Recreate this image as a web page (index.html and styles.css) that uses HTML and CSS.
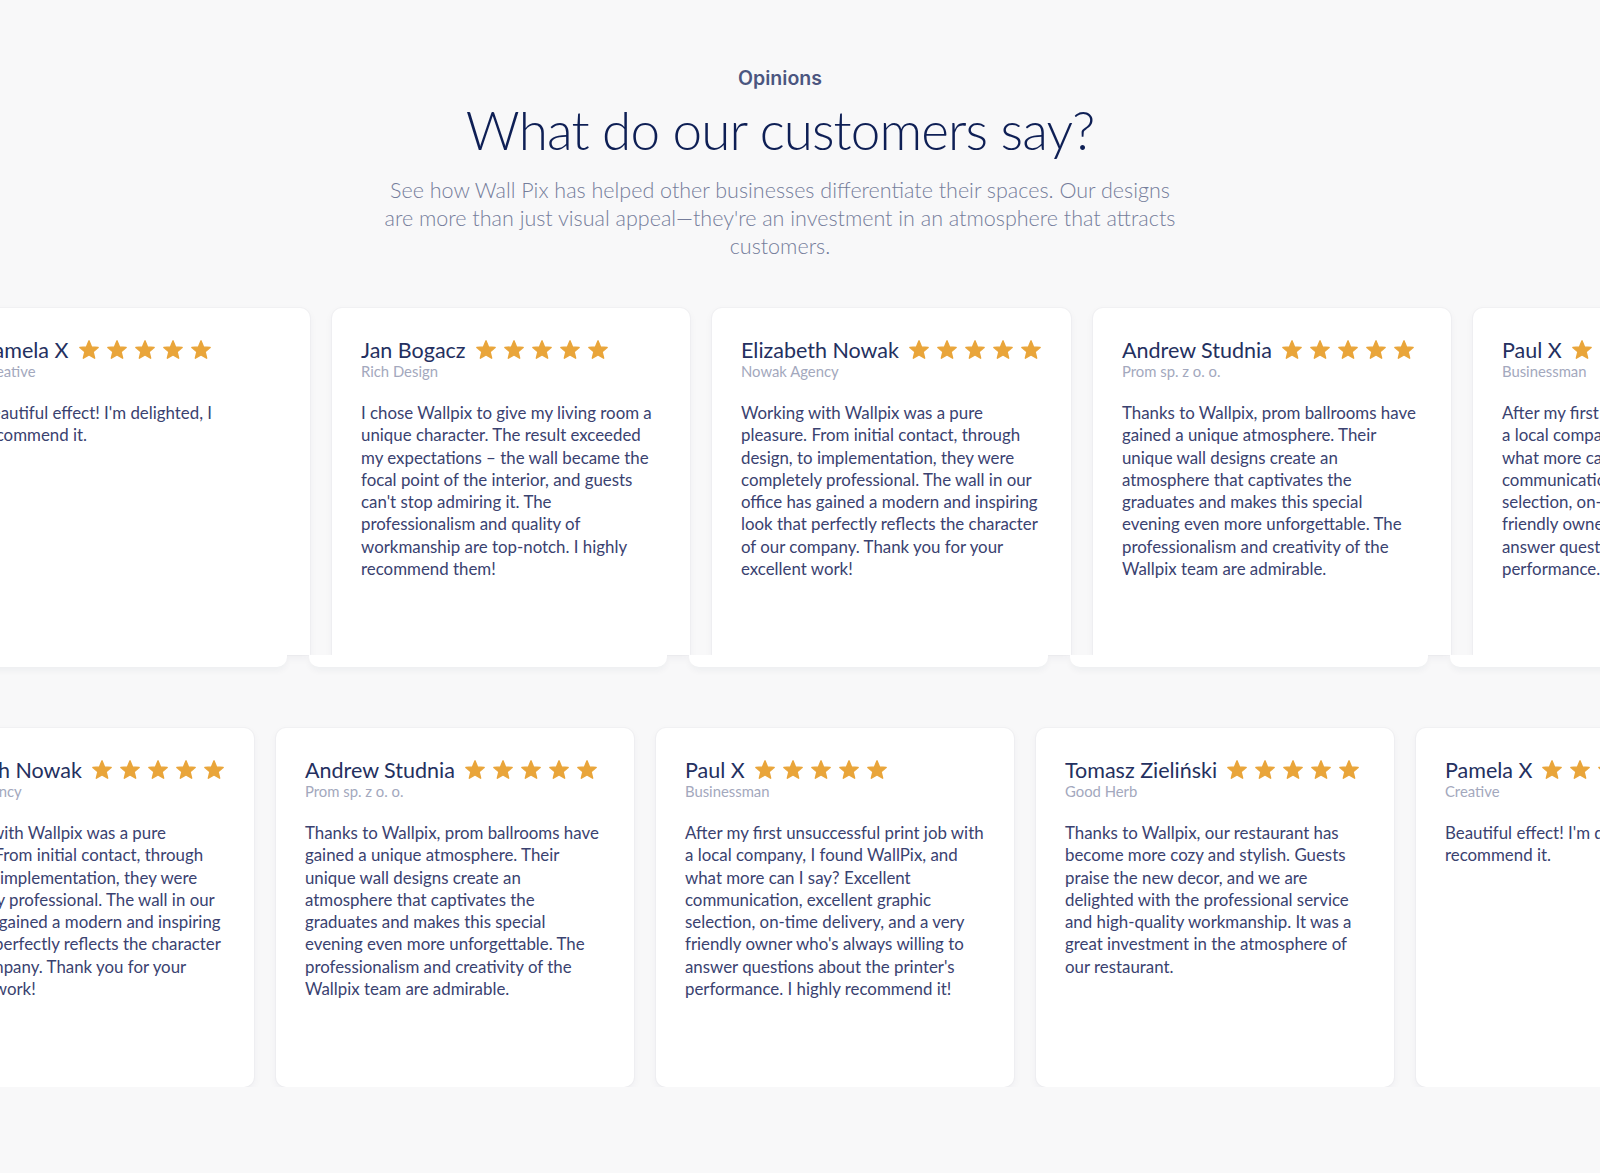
FILE: index.html
```html
<!DOCTYPE html>
<html lang="en">
<head>
<meta charset="utf-8">
<title>Opinions</title>
<link rel="stylesheet" href="styles.css">
</head>
<body>
<svg class="defs" width="0" height="0" aria-hidden="true">
  <symbol id="star" viewBox="0 0 24 24">
    <path d="M12 17.27L18.18 21l-1.64-7.03L22 9.24l-7.19-.61L12 2 9.19 8.63 2 9.24l5.46 4.73L5.82 21z" fill="#e9a53a" stroke="#e9a53a" stroke-width="1.5" stroke-linejoin="round"/>
  </symbol>
</svg>
<section class="opinions">
  <header class="intro">
    <p class="eyebrow">Opinions</p>
    <h2 class="title">What do our customers say?</h2>
    <p class="lead">See how Wall Pix has helped other businesses differentiate their spaces. Our designs are more than just visual appeal—they're an investment in an atmosphere that attracts customers.</p>
  </header>

  <div class="track track-1">
    <article class="card">
      <div class="who"><h3 class="name">Pamela X</h3><div class="stars"><svg><use href="#star"/></svg><svg><use href="#star"/></svg><svg><use href="#star"/></svg><svg><use href="#star"/></svg><svg><use href="#star"/></svg></div></div>
      <p class="role">Creative</p>
      <p class="text">Beautiful effect! I'm delighted, I recommend it.</p>
    </article>
    <article class="card">
      <div class="who"><h3 class="name">Jan Bogacz</h3><div class="stars"><svg><use href="#star"/></svg><svg><use href="#star"/></svg><svg><use href="#star"/></svg><svg><use href="#star"/></svg><svg><use href="#star"/></svg></div></div>
      <p class="role">Rich Design</p>
      <p class="text">I chose Wallpix to give my living room a unique character. The result exceeded my expectations – the wall became the focal point of the interior, and guests can't stop admiring it. The professionalism and quality of workmanship are top-notch. I highly recommend them!</p>
    </article>
    <article class="card">
      <div class="who"><h3 class="name">Elizabeth Nowak</h3><div class="stars"><svg><use href="#star"/></svg><svg><use href="#star"/></svg><svg><use href="#star"/></svg><svg><use href="#star"/></svg><svg><use href="#star"/></svg></div></div>
      <p class="role">Nowak Agency</p>
      <p class="text">Working with Wallpix was a pure pleasure. From initial contact, through design, to implementation, they were completely professional. The wall in our office has gained a modern and inspiring look that perfectly reflects the character of our company. Thank you for your excellent work!</p>
    </article>
    <article class="card">
      <div class="who"><h3 class="name">Andrew Studnia</h3><div class="stars"><svg><use href="#star"/></svg><svg><use href="#star"/></svg><svg><use href="#star"/></svg><svg><use href="#star"/></svg><svg><use href="#star"/></svg></div></div>
      <p class="role">Prom sp. z o. o.</p>
      <p class="text">Thanks to Wallpix, prom ballrooms have gained a unique atmosphere. Their unique wall designs create an atmosphere that captivates the graduates and makes this special evening even more unforgettable. The professionalism and creativity of the Wallpix team are admirable.</p>
    </article>
    <article class="card">
      <div class="who"><h3 class="name">Paul X</h3><div class="stars"><svg><use href="#star"/></svg><svg><use href="#star"/></svg><svg><use href="#star"/></svg><svg><use href="#star"/></svg><svg><use href="#star"/></svg></div></div>
      <p class="role">Businessman</p>
      <p class="text">After my first unsuccessful print job with a local company, I found WallPix, and what more can I say? Excellent communication, excellent graphic selection, on-time delivery, and a very friendly owner who's always willing to answer questions about the printer's performance. I highly recommend it!</p>
    </article>
  </div>

  <div class="track track-2">
    <article class="card">
      <div class="who"><h3 class="name">Elizabeth Nowak</h3><div class="stars"><svg><use href="#star"/></svg><svg><use href="#star"/></svg><svg><use href="#star"/></svg><svg><use href="#star"/></svg><svg><use href="#star"/></svg></div></div>
      <p class="role">Nowak Agency</p>
      <p class="text">Working with Wallpix was a pure pleasure. From initial contact, through design, to implementation, they were completely professional. The wall in our office has gained a modern and inspiring look that perfectly reflects the character of our company. Thank you for your excellent work!</p>
    </article>
    <article class="card">
      <div class="who"><h3 class="name">Andrew Studnia</h3><div class="stars"><svg><use href="#star"/></svg><svg><use href="#star"/></svg><svg><use href="#star"/></svg><svg><use href="#star"/></svg><svg><use href="#star"/></svg></div></div>
      <p class="role">Prom sp. z o. o.</p>
      <p class="text">Thanks to Wallpix, prom ballrooms have gained a unique atmosphere. Their unique wall designs create an atmosphere that captivates the graduates and makes this special evening even more unforgettable. The professionalism and creativity of the Wallpix team are admirable.</p>
    </article>
    <article class="card">
      <div class="who"><h3 class="name">Paul X</h3><div class="stars"><svg><use href="#star"/></svg><svg><use href="#star"/></svg><svg><use href="#star"/></svg><svg><use href="#star"/></svg><svg><use href="#star"/></svg></div></div>
      <p class="role">Businessman</p>
      <p class="text">After my first unsuccessful print job with a local company, I found WallPix, and what more can I say? Excellent communication, excellent graphic selection, on-time delivery, and a very friendly owner who's always willing to answer questions about the printer's performance. I highly recommend it!</p>
    </article>
    <article class="card">
      <div class="who"><h3 class="name">Tomasz Zieliński</h3><div class="stars"><svg><use href="#star"/></svg><svg><use href="#star"/></svg><svg><use href="#star"/></svg><svg><use href="#star"/></svg><svg><use href="#star"/></svg></div></div>
      <p class="role">Good Herb</p>
      <p class="text">Thanks to Wallpix, our restaurant has become more cozy and stylish. Guests praise the new decor, and we are delighted with the professional service and high-quality workmanship. It was a great investment in the atmosphere of our restaurant.</p>
    </article>
    <article class="card">
      <div class="who"><h3 class="name">Pamela X</h3><div class="stars"><svg><use href="#star"/></svg><svg><use href="#star"/></svg><svg><use href="#star"/></svg><svg><use href="#star"/></svg><svg><use href="#star"/></svg></div></div>
      <p class="role">Creative</p>
      <p class="text">Beautiful effect! I'm delighted, I recommend it.</p>
    </article>
  </div>
</section>
</body>
</html>
```
FILE: styles.css
```css
* { box-sizing: border-box; }

html, body {
  margin: 0;
  padding: 0;
}

body {
  background: #f8f8f9;
  font-family: Lato, "Open Sans", sans-serif;
  height: 1173px;
  overflow: hidden;
}

.defs {
  position: absolute;
  width: 0;
  height: 0;
}

.opinions {
  padding-top: 66px;
  overflow: hidden;
}

.intro {
  padding-right: 40px;
  text-align: center;
}

.eyebrow {
  margin: 0;
  font-family: Inter, Roboto, sans-serif;
  font-weight: 600;
  font-size: 19.5px;
  line-height: 24px;
  color: #4b5680;
}

.title {
  margin: 9.5px 0 0;
  font-weight: 300;
  font-size: 53px;
  letter-spacing: -0.9px;
  line-height: 60px;
  color: #0e1f55;
}

.lead {
  margin: 16.5px auto 0;
  max-width: 800px;
  font-weight: 300;
  font-size: 21.5px;
  line-height: 28px;
  color: #757d9b;
}

.track {
  display: flex;
  gap: 22px;
}

.track-1 {
  margin-top: 48px;
  margin-left: -48px;
}

.track-2 {
  margin-top: 73px;
  margin-left: -105px;
}

.card {
  position: relative;
  flex: 0 0 358px;
  height: 359px;
  padding: 30px 29px 0;
  background: #fff;
  border-radius: 10px;
  box-shadow: 0 3px 8px rgba(30, 40, 80, 0.05), 0 0 0 1px rgba(30, 40, 80, 0.025);
}

.track-1 .card {
  height: 347px;
  border-radius: 10px 10px 0 0;
}

.track-1 .card::after {
  content: "";
  position: absolute;
  left: -23px;
  top: 100%;
  width: 100%;
  height: 12px;
  background: #fff;
  border-radius: 0 0 10px 10px;
  box-shadow: 0 4px 6px rgba(30, 40, 80, 0.045);
}

.who {
  display: flex;
  align-items: center;
  gap: 9px;
}

.name {
  margin: 0;
  font-weight: 400;
  font-size: 21.5px;
  line-height: 24px;
  color: #243060;
  white-space: nowrap;
}

.stars {
  display: flex;
  gap: 6px;
}

.stars svg {
  width: 22px;
  height: 22px;
  display: block;
}

.role {
  margin: 0;
  font-size: 14.85px;
  line-height: 18px;
  color: #a3a8bd;
}

.text {
  margin: 22px 0 0;
  font-size: 16.87px;
  line-height: 22.3px;
  color: #3a4270;
}
```
